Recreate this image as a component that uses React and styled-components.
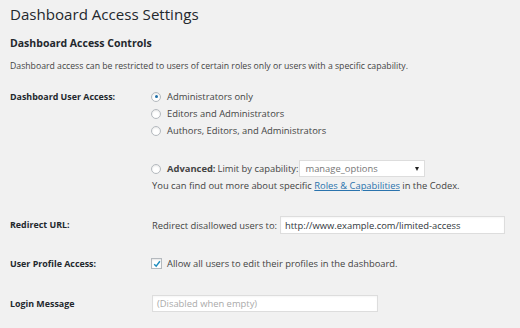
import styled, { createGlobalStyle } from "styled-components";

const GlobalStyle = createGlobalStyle`
  html, body {
    margin: 0;
    padding: 0;
    background: #f1f1f1;
  }
  body {
    font-family: "Open Sans", "DejaVu Sans", sans-serif;
    color: #444;
  }
`;

// Whole settings page
const Page = styled.div`
  width: 520px;
  height: 328px;
  padding: 2px 10px 0;
  box-sizing: border-box;
  overflow: hidden;
`;

const Title = styled.h1`
  margin: 0;
  font-size: 15.1px;
  font-weight: 400;
  line-height: 24px;
  color: #23282d;
`;

const SectionTitle = styled.h2`
  margin: 9px 0 0;
  font-size: 10.5px;
  font-weight: 700;
  line-height: 16px;
  color: #23282d;
`;

const Description = styled.p`
  margin: 8px 0 0;
  font-size: 8.7px;
  line-height: 14px;
  color: #444;
`;

// One setting row: label column + field column
const Row = styled.div`
  display: grid;
  grid-template-columns: 142px 1fr;
  align-items: start;
  margin-top: ${(p) => p.$top}px;
`;

const Label = styled.div`
  font-size: 8.9px;
  font-weight: 700;
  line-height: 17px;
  color: #23282d;
  padding-top: ${(p) => p.$shift || 0}px;
`;

const Field = styled.div`
  display: flex;
  flex-direction: column;
`;

const Line = styled.label`
  display: flex;
  align-items: center;
  height: 17px;
  font-size: 9.4px;
  color: #444;
  white-space: nowrap;
  margin-top: ${(p) => p.$top || 0}px;
`;

const Radio = styled.span`
  position: relative;
  width: 8px;
  height: 8px;
  margin-left: -1px;
  margin-right: 6px;
  border: 1px solid #b4b9be;
  border-radius: 50%;
  background: #fff;
  box-shadow: inset 0 1px 2px rgba(0, 0, 0, 0.1);
  flex: none;

  &::after {
    content: "";
    display: ${(p) => (p.$checked ? "block" : "none")};
    position: absolute;
    left: 2.5px;
    top: 2.5px;
    width: 3px;
    height: 3px;
    border-radius: 50%;
    background: #1e6ea7;
  }
`;

const Checkbox = styled.span`
  display: flex;
  align-items: center;
  justify-content: center;
  width: 9px;
  height: 9px;
  margin-left: -1px;
  margin-right: 5px;
  border: 1px solid #b4b9be;
  background: #fff;
  box-shadow: inset 0 1px 2px rgba(0, 0, 0, 0.1);
  flex: none;
`;

const Strong = styled.strong`
  font-weight: 700;
  margin-right: 2px;
`;

const Select = styled.div`
  display: flex;
  align-items: center;
  justify-content: space-between;
  width: 126px;
  height: 17px;
  margin-left: 1px;
  padding: 0 5px;
  box-sizing: border-box;
  background: #fff;
  border: 1px solid #ddd;
  color: #777;
  font-size: 9.4px;
`;

const Arrow = styled.span`
  width: 0;
  height: 0;
  border-left: 2.5px solid transparent;
  border-right: 2.5px solid transparent;
  border-top: 4px solid #222;
`;

const Help = styled.div`
  height: 18px;
  line-height: 18px;
  font-size: 9.4px;
  color: #444;
  white-space: nowrap;
`;

const Link = styled.a`
  color: #2a73ad;
  text-decoration: underline;
`;

const Input = styled.div`
  display: flex;
  align-items: center;
  width: ${(p) => p.$width}px;
  height: ${(p) => p.$height}px;
  margin-left: ${(p) => p.$left || 0}px;
  padding: 0 4px;
  box-sizing: border-box;
  background: #fff;
  border: 1px solid #ddd;
  box-shadow: inset 0 1px 2px rgba(0, 0, 0, 0.04);
  font-size: 9.4px;
  color: ${(p) => (p.$placeholder ? "#aaa" : "#32373c")};
  white-space: nowrap;
`;

const InlineRow = styled.div`
  display: flex;
  align-items: center;
  font-size: 9.4px;
  color: #444;
  white-space: nowrap;
`;

const roles = [
  { text: "Administrators only", checked: true },
  { text: "Editors and Administrators" },
  { text: "Authors, Editors, and Administrators" },
];

export default function App() {
  return (
    <>
      <GlobalStyle />
      <Page>
        <Title>Dashboard Access Settings</Title>
        <SectionTitle>Dashboard Access Controls</SectionTitle>
        <Description>
          Dashboard access can be restricted to users of certain roles only or users with a specific
          capability.
        </Description>

        <Row $top={15}>
          <Label $shift={-2}>Dashboard User Access:</Label>
          <Field>
            {roles.map((r) => (
              <Line key={r.text}>
                <Radio $checked={r.checked} />
                {r.text}
              </Line>
            ))}
            <Line $top={21}>
              <Radio />
              <Strong>Advanced:</Strong> Limit by capability:
              <Select>
                manage_options
                <Arrow />
              </Select>
            </Line>
            <Help>
              You can find out more about specific <Link href="#">Roles &amp; Capabilities</Link> in
              the Codex.
            </Help>
          </Field>
        </Row>

        <Row $top={21}>
          <Label $shift={-1}>Redirect URL:</Label>
          <InlineRow>
            Redirect disallowed users to:
            <Input $width={225} $height={18} $left={3}>
              http://www.example.com/limited-access
            </Input>
          </InlineRow>
        </Row>

        <Row $top={21}>
          <Label>User Profile Access:</Label>
          <Line>
            <Checkbox>
              <svg width="8" height="8" viewBox="0 0 10 10">
                <path d="M1.5 5.2 L4 7.8 L8.6 1.6" fill="none" stroke="#1e8cbe" strokeWidth="1.8" />
              </svg>
            </Checkbox>
            Allow all users to edit their profiles in the dashboard.
          </Line>
        </Row>

        <Row $top={23}>
          <Label $shift={-4}>Login Message</Label>
          <Input $width={226} $height={17} $placeholder>
            (Disabled when empty)
          </Input>
        </Row>
      </Page>
    </>
  );
}
